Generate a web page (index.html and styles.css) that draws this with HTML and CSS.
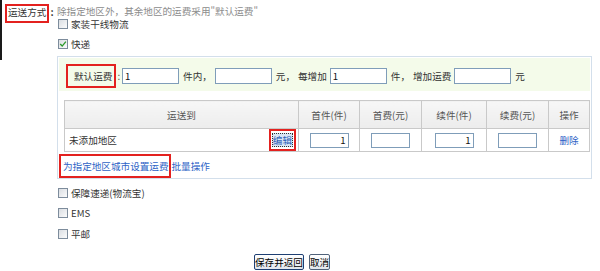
FILE: index.html
```html
<!DOCTYPE html>
<html lang="zh-CN">
<head>
<meta charset="utf-8">
<title>运送方式</title>
<link rel="stylesheet" href="styles.css">
</head>
<body>
<div class="page">
  <div class="form-row">
    <div class="field-label"><span class="mark label-mark">运送方式</span><span class="colon">:</span></div>
    <div class="field-body">
      <div class="hint">除指定地区外，其余地区的运费采用"默认运费"</div>
      <div class="opt"><span class="cb"></span><span>家装干线物流</span></div>
      <div class="opt opt-gap"><span class="cb"><svg viewBox="0 0 10 10" width="8" height="8"><path d="M1.5 5 L4 7.6 L8.6 2" fill="none" stroke="#2c9a2c" stroke-width="1.7"/></svg></span><span>快递</span></div>
      <div class="panel">
        <div class="default-row">
          <span class="mark dmark">默认运费</span><span class="sep">:</span><input class="fi" value="1"><span class="t">件内，</span><input class="fi" value=""><span class="t">元，</span><span class="t2">每增加</span><input class="fi" value="1"><span class="t">件，</span><span class="t3">增加运费</span><input class="fi" value=""><span class="t">元</span>
        </div>
        <table class="fees">
          <colgroup>
            <col class="c-area"><col class="c-n"><col class="c-n2"><col class="c-n3"><col class="c-n2"><col class="c-op">
          </colgroup>
          <thead>
            <tr><th>运送到</th><th>首件(件)</th><th>首费(元)</th><th>续件(件)</th><th>续费(元)</th><th>操作</th></tr>
          </thead>
          <tbody>
            <tr>
              <td><div class="area-in"><span>未添加地区</span><span class="mark emark"><span class="edit">编辑</span></span></div></td>
              <td class="num"><input class="ci" value="1"></td>
              <td class="num"><input class="ci" value=""></td>
              <td class="num"><input class="ci" value="1"></td>
              <td class="num"><input class="ci" value=""></td>
              <td class="num"><a class="lnk" href="#">删除</a></td>
            </tr>
          </tbody>
        </table>
        <div class="links"><span class="mark lmark"><a class="lnk" href="#">为指定地区城市设置运费</a></span><a class="lnk bulk" href="#">批量操作</a></div>
      </div>
      <div class="opt opt-low"><span class="cb"></span><span>保障速递(物流宝)</span></div>
      <div class="opt opt-low"><span class="cb"></span><span>EMS</span></div>
      <div class="opt opt-low2"><span class="cb"></span><span>平邮</span></div>
    </div>
  </div>
  <div class="actions"><button class="btn btn-main">保存并返回</button><button class="btn">取消</button></div>
</div>
</body>
</html>
```
FILE: styles.css
```css
* { box-sizing: border-box; }
html, body { margin: 0; padding: 0; background: #fff; }
body {
  font-family: "Noto Sans CJK SC", "Noto Sans", sans-serif;
  font-size: 9.6px;
  color: #333;
  width: 600px;
  height: 271px;
  overflow: hidden;
}
.form-row { display: flex; align-items: flex-start; }
.field-label {
  flex: 0 0 57px;
  height: 60px;
  border-left: 2px solid #1a1a1a;
  padding: 4px 0 0 3px;
  display: flex;
  align-items: flex-start;
}
.mark { border: 2px solid #e3211f; }
.label-mark {
  display: block;
  height: 19px;
  padding: 0 1px;
  line-height: 13px;
  color: #333;
  white-space: nowrap;
}
.colon { margin-left: 1px; line-height: 17px; font-weight: bold; color: #222; }
.field-body { flex: 1; min-width: 0; }
.hint { margin-top: 4px; line-height: 14px; color: #8c8c8c; white-space: nowrap; }
.opt { display: flex; align-items: center; height: 12px; line-height: 12px; white-space: nowrap; }
.opt-gap { margin-top: 8px; }
.opt-low { margin-top: 8px; }
.opt-low2 { margin-top: 9px; }
.cb {
  width: 10px;
  height: 10px;
  margin: 0 3px 0 1px;
  border: 1px solid #7d8c9c;
  background: linear-gradient(135deg, #d9dde2, #fbfbfb);
  display: flex;
  align-items: center;
  justify-content: center;
}
.panel {
  width: 535px;
  margin-top: 6px;
  border: 1px solid #d3dfeb;
  padding: 1px 1px 0 1px;
}
.default-row {
  display: flex;
  align-items: center;
  height: 33px;
  padding: 3px 0 0 7px;
  background: #f4fbea;
  white-space: nowrap;
}
.dmark { height: 24px; padding: 0 2px 0 6px; display: flex; align-items: center; }
.sep { margin: 0 2px 0 1px; }
.fi {
  width: 57px;
  height: 16px;
  margin: 0;
  padding: 0 2px;
  border: 1px solid #7f9db9;
  background: #fff;
  font-family: inherit;
  font-size: 9.6px;
  color: #111;
  outline: none;
}
.t { margin: 0 3px 0 4px; }
.t2 { margin: 0 3px 0 0; }
.t3 { margin: 0 3px 0 0; }
.fees {
  border-collapse: collapse;
  table-layout: fixed;
  width: 525px;
  margin: 9px 0 0 5px;
}
.c-area { width: 234px; }
.c-n { width: 61px; }
.c-n2 { width: 62px; }
.c-n3 { width: 65px; }
.c-op { width: 41px; }
.fees th, .fees td { border: 1px solid #c9c9c9; padding: 0; }
.fees th {
  height: 28px;
  background: linear-gradient(#f7f7f7, #ececec);
  font-weight: normal;
  color: #555;
  text-align: center;
}
.fees td { height: 23px; }
.area-in {
  display: flex;
  justify-content: space-between;
  align-items: center;
  height: 22px;
  padding: 0 2px 0 4px;
}
.emark { height: 22px; display: flex; align-items: center; padding: 0 1px; }
.edit {
  border: 1px dotted #333;
  background: #d9e5f5;
  color: #2d5fb8;
  line-height: 12px;
}
.num { text-align: center; }
.ci {
  width: 39px;
  height: 15px;
  margin: 0;
  padding: 0 2px;
  border: 1px solid #7f9db9;
  background: #fff;
  font-family: inherit;
  font-size: 9.6px;
  color: #111;
  text-align: right;
  vertical-align: middle;
  outline: none;
}
.lnk { color: #2e63c6; text-decoration: none; }
.links { display: flex; align-items: center; height: 24px; margin-top: 2px; white-space: nowrap; }
.lmark { height: 24px; padding: 0 0 0 2px; display: flex; align-items: center; }
.bulk { margin-left: 1px; }
.actions { display: flex; padding-left: 254px; margin-top: 14px; }
.btn {
  height: 16px;
  padding: 0;
  font-family: inherit;
  font-size: 9.6px;
  line-height: 14px;
  color: #000;
  border: 1px solid #50627a;
  border-radius: 2px;
  background: linear-gradient(#ffffff, #e1e6ed);
}
.btn-main { border-color: #1e3f73; }
.btn + .btn { margin-left: 5px; }
```
